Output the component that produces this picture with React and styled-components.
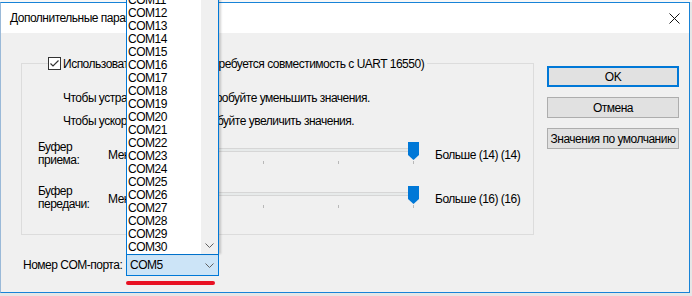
import { createGlobalStyle, styled } from "styled-components";

const GlobalStyle = createGlobalStyle`
  html, body {
    margin: 0;
    padding: 0;
  }
  body {
    background: #e6e6e6;
    font-family: "Liberation Sans", Arial, sans-serif;
    font-size: 12px;
    letter-spacing: -0.5px;
    color: #000;
  }
`;

const Screen = styled.div`
  width: 692px;
  height: 296px;
  overflow: hidden;
  background: #e6e6e6;
  display: flex;
  flex-direction: column;
  white-space: nowrap;
`;

const TopStrip = styled.div`
  flex: none;
  height: 2px;
  background: #f7f7f7;
`;

const Window = styled.div`
  flex: none;
  width: 690px;
  height: 291px;
  box-sizing: border-box;
  border: 1px solid #1883d7;
  border-left-color: #9ab9d8;
  background: #f0f0f0;
  display: flex;
  flex-direction: column;
`;

const TitleBar = styled.div`
  flex: none;
  height: 30px;
  background: #fff;
  display: flex;
  align-items: center;
  padding-left: 9px;
  font-size: 12px;
`;

const TitleText = styled.span`
  flex: 1;
`;

const CloseBox = styled.div`
  width: 30px;
  height: 30px;
  display: flex;
  align-items: center;
  justify-content: center;
`;

const Body = styled.div`
  flex: 1;
  display: flex;
`;

const LeftColumn = styled.div`
  padding: 30px 0 0 20px;
  display: flex;
  flex-direction: column;
`;

const GroupBox = styled.div`
  width: 513px;
  height: 172px;
  box-sizing: border-box;
  border: 1px solid #dcdcdc;
  display: flex;
  flex-direction: column;
`;

const Legend = styled.div`
  align-self: flex-start;
  margin: -8px 0 0 26px;
  height: 15px;
  padding-right: 3px;
  background: #f0f0f0;
  display: flex;
  align-items: center;
  gap: 2px;
`;

const CheckBox = styled.div`
  width: 13px;
  height: 13px;
  box-sizing: border-box;
  border: 1px solid #333;
  background: #fff;
  display: flex;
`;

const Hint = styled.div`
  padding-left: 41px;
  line-height: 14px;
  margin-top: ${(p) => p.$top}px;
`;

const SliderRow = styled.div`
  display: grid;
  grid-template-columns: 70px 74px 237px auto;
  align-items: center;
  height: 28px;
  padding-left: 16px;
  margin-top: ${(p) => p.$top}px;
`;

const RowLabel = styled.div`
  line-height: 13.5px;
`;

const MinLabel = styled.div`
  padding-top: 2px;
`;

const MaxLabel = styled.div`
  padding-left: 16px;
  padding-top: 2px;
`;

const Slider = styled.div`
  position: relative;
  height: 24px;
`;

const Groove = styled.div`
  margin-top: 6px;
  height: 4px;
  box-sizing: border-box;
  border: 1px solid #d6d6d6;
  background: #e7eaea;
`;

const Ticks = styled.div`
  display: flex;
  justify-content: space-between;
  padding: 0 5px 0 6px;
  margin-top: 9px;
`;

const Tick = styled.div`
  width: 1px;
  height: 3px;
  background: #b8b8b8;
`;

const Thumb = styled.svg`
  position: absolute;
  top: 0;
`;

const ComRow = styled.div`
  display: flex;
  align-items: flex-start;
  margin-top: 19px;
  padding-left: 2px;
`;

const ComLabel = styled.div`
  width: 103px;
  line-height: 22px;
`;

const ComField = styled.div`
  position: relative;
  display: flex;
  flex-direction: column;
`;

const Combo = styled.div`
  width: 93px;
  height: 22px;
  box-sizing: border-box;
  border: 1px solid #0078d7;
  background: #cce4f7;
  display: flex;
  align-items: center;
  padding-left: 3px;
`;

const ComboText = styled.span`
  flex: 1;
`;

const ArrowBox = styled.div`
  width: 17px;
  height: 17px;
  display: flex;
  align-items: center;
  justify-content: center;
`;

const Underline = styled.div`
  margin-top: 5px;
  width: 89px;
  height: 4px;
  border-radius: 2px;
  background: #e81123;
`;

const Popup = styled.div`
  position: absolute;
  left: 0;
  bottom: 100%;
  width: 93px;
  box-sizing: border-box;
  border: 1px solid #0078d7;
  border-bottom: none;
  background: #fff;
  display: flex;
  box-shadow: 2px 0 2px rgba(0, 0, 0, 0.18);
`;

const Items = styled.div`
  flex: 1;
  display: flex;
  flex-direction: column;
`;

const Item = styled.div`
  height: 13px;
  line-height: 13px;
  padding-left: 1px;
`;

const ScrollBar = styled.div`
  width: 17px;
  background: #f0f0f0;
  display: flex;
  flex-direction: column;
  justify-content: flex-end;
`;

const RightColumn = styled.div`
  padding: 33px 0 0 13px;
  display: flex;
  flex-direction: column;
  gap: 10px;
`;

const Button = styled.div`
  width: 132px;
  height: 21px;
  box-sizing: border-box;
  border: ${(p) => (p.$primary ? "2px solid #0078d7" : "1px solid #adadad")};
  background: #e1e1e1;
  display: flex;
  align-items: center;
  justify-content: center;
`;

const Chevron = () => (
  <svg width="9" height="5" viewBox="0 0 9 5">
    <path d="M0.5 0.5 L4.5 4.5 L8.5 0.5" fill="none" stroke="#606060" strokeWidth="1" />
  </svg>
);

function BufferSlider({ label, max, value, ticks }) {
  const thumbLeft = 226 * value;
  return (
    <>
      <RowLabel>{label}</RowLabel>
      <MinLabel>Меньше (1)</MinLabel>
      <Slider>
        <Groove />
        <Ticks>
          {Array.from({ length: ticks }).map((_, i) => (
            <Tick key={i} />
          ))}
        </Ticks>
        <Thumb width="11" height="18" viewBox="0 0 11 18" style={{ left: thumbLeft }}>
          <path d="M0 0 H11 V13 L5.5 18 L0 13 Z" fill="#0078d7" />
        </Thumb>
      </Slider>
      <MaxLabel>{max}</MaxLabel>
    </>
  );
}

const ports = [];
for (let i = 11; i <= 30; i++) ports.push("COM" + i);

export default function App() {
  return (
    <Screen>
      <GlobalStyle />
      <TopStrip />
      <Window>
        <TitleBar>
          <TitleText>Дополнительные параметры для COM5</TitleText>
          <CloseBox>
            <svg width="11" height="11" viewBox="0 0 11 11">
              <path d="M0.5 0.5 L10.5 10.5 M10.5 0.5 L0.5 10.5" stroke="#111" strokeWidth="1" />
            </svg>
          </CloseBox>
        </TitleBar>
        <Body>
          <LeftColumn>
            <GroupBox>
              <Legend>
                <CheckBox>
                  <svg width="11" height="11" viewBox="0 0 11 11">
                    <path d="M1.5 5.5 L4 8 L9.5 2.5" fill="none" stroke="#333" strokeWidth="1.2" />
                  </svg>
                </CheckBox>
                <span>Использовать FIFO-буферы (требуется совместимость с UART 16550)</span>
              </Legend>
              <Hint $top={20}>Чтобы устранить ошибки, попробуйте уменьшить значения.</Hint>
              <Hint $top={9}>Чтобы ускорить работу, попробуйте увеличить значения.</Hint>
              <SliderRow $top={12}>
                <BufferSlider label={<>Буфер<br />приема:</>} max="Больше (14) (14)" value={1} ticks={4} />
              </SliderRow>
              <SliderRow $top={16}>
                <BufferSlider label={<>Буфер<br />передачи:</>} max="Больше (16) (16)" value={1} ticks={4} />
              </SliderRow>
            </GroupBox>
            <ComRow>
              <ComLabel>Номер COM-порта:</ComLabel>
              <ComField>
                <Popup>
                  <Items>
                    {ports.map((p) => (
                      <Item key={p}>{p}</Item>
                    ))}
                  </Items>
                  <ScrollBar>
                    <ArrowBox>
                      <Chevron />
                    </ArrowBox>
                  </ScrollBar>
                </Popup>
                <Combo>
                  <ComboText>COM5</ComboText>
                  <ArrowBox>
                    <Chevron />
                  </ArrowBox>
                </Combo>
                <Underline />
              </ComField>
            </ComRow>
          </LeftColumn>
          <RightColumn>
            <Button $primary>OK</Button>
            <Button>Отмена</Button>
            <Button>Значения по умолчанию</Button>
          </RightColumn>
        </Body>
      </Window>
    </Screen>
  );
}
